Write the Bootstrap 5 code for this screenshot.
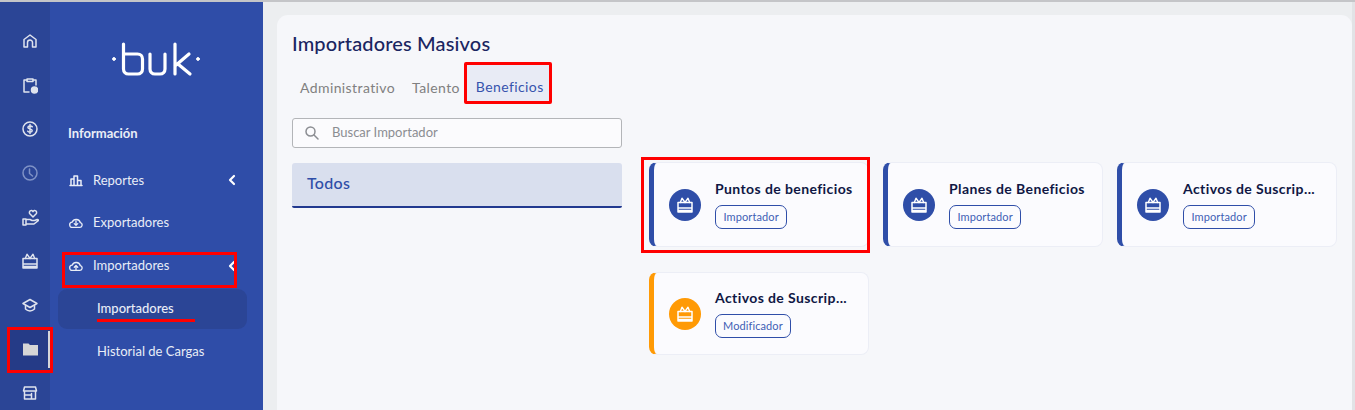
<!DOCTYPE html>
<html lang="es">
<head>
<meta charset="UTF-8">
<meta name="viewport" content="width=device-width, initial-scale=1.0">
<title>Importadores Masivos</title>
<link href="https://cdn.jsdelivr.net/npm/bootstrap@5.3.0/dist/css/bootstrap.min.css" rel="stylesheet">
<style>
html, body { height: 410px; overflow: hidden; }
body { font-family: Lato, "Noto Sans", sans-serif; background: #eceef0; }
.top-shade { height: 2px; background: #c4c5c8; }
.shell { height: 408px; }
.rail { width: 50px; background: #2b4596; padding-top: 17px; flex: none; }
.rail-item { height: 44px; padding-left: 10px; color: #dfe3ee; display: flex; align-items: center; justify-content: center; }
.rail-item.dim { color: #7f92c6; }
.rail-item.on { position: relative; width: 40px; margin-left: 10px; padding-left: 0; background: #253b87; color: #d6d6d6; }
.rail-item.on::before { content: ""; position: absolute; right: 0; top: 4px; bottom: 3px; width: 2px; background: #d4d6da; }
.rail-item.on::after { content: ""; position: absolute; inset: 0 -3px -2px -3px; border: 3px solid #f00; }
.side { width: 213px; background: #2f4da8; flex: none; color: #e9edf7; font-size: 13px; }
.logo-box { height: 44px; margin: 38px 0 0 59px; }
.side-title { margin: 39px 0 0 18px; font-weight: 700; font-size: 13px; height: 20px; line-height: 20px; }
.side-link { height: 42.7px; padding-left: 19px; display: flex; align-items: center; gap: 10px; position: relative; }
.side-link .chev { position: absolute; left: 178px; top: 50%; margin-top: -6px; }
.side-link.first { margin-top: 16px; }
.side-link.marked { z-index: 2; }
.side-link.marked::after { content: ""; position: absolute; left: 12px; top: 8px; width: 175px; height: 36px; border: 3px solid #f00; pointer-events: none; }
.sub-link { height: 43px; padding-left: 47px; display: flex; align-items: center; position: relative; }
.sub-link.on { margin: 2px 16px 1px 8px; padding-left: 39px; height: 40px; background: #2b4596; border-radius: 9px; font-weight: 500; }
.sub-link.on span { position: relative; }
.sub-link.on span::after { content: ""; position: absolute; left: 0; right: -21px; bottom: -3px; height: 3px; background: #f00; }
.workspace { flex: 1; padding: 13px 0 0 14px; background: #eceef0; border-right: 3px solid #e2e3e6; }
.sheet { height: 100%; background: #f6f7fa; border-radius: 11px 11px 0 0; padding: 17px 15px 0; }
.sheet-title { font-size: 20px; font-weight: 500; color: #1a2561; margin: 0; line-height: 22px; letter-spacing: .15px; }
.tab-row { margin-top: 8px; height: 42px; font-size: 14px; color: #808080; letter-spacing: .4px; padding-left: 8px; }
.tab-item { margin: 8px 17px 0 0; }
.tab-sel { margin: 0 0 0 -13px; padding: 0 5px 0 9px; height: 42px; line-height: 44px; background: #e8ebf5; color: #3653ad; border: 3px solid #f00; border-radius: 2px; }
.finder { margin-top: 14px; width: 330px; height: 30px; background: #fbfbfd; border: 1px solid #b3b5b8; border-radius: 3px; padding: 0 12px; display: flex; align-items: center; gap: 13px; color: #8b8d92; font-size: 13px; }
.cat-box { margin-top: 15px; width: 330px; height: 45px; background: #d9dfee; border-bottom: 2px solid #22398f; border-radius: 3px 3px 2px 2px; color: #2f4ea8; font-size: 16px; line-height: 40px; padding-left: 15px; letter-spacing: .3px; font-weight: 500; }
.left-col { width: 330px; flex: none; }
.import-grid { margin: 58px 0 0 27px; width: 688px; display: grid; grid-template-columns: 220px 220px 220px; column-gap: 14px; row-gap: 25px; align-content: start; }
.imp-card { height: 85px; background: #fbfbfe; border: 1px solid #eceef6; border-left: 5px solid #2f4ea8; border-radius: 8px; padding-left: 15px; display: flex; align-items: center; gap: 14px; position: relative; }
.imp-card.alt { height: 83px; border-left-color: #ff9a05; }
.imp-card.marked::after { content: ""; position: absolute; left: -13px; top: -6px; width: 229px; height: 96px; border: 3px solid #f00; pointer-events: none; }
.imp-dot { width: 32px; height: 32px; border-radius: 50%; background: #2f4ea8; flex: none; color: #fff; display: flex; align-items: center; justify-content: center; }
.alt .imp-dot { background: #ff9a05; }
.imp-name { font-size: 14px; font-weight: 700; color: #0f1744; line-height: 18px; letter-spacing: .4px; white-space: nowrap; }
.imp-tag { display: inline-block; margin-top: 7px; height: 24px; line-height: 22px; padding: 0 7.5px; border: 1px solid #2f4ea8; border-radius: 7px; font-size: 11px; color: #3f5fb5; letter-spacing: .1px; }
.alt .imp-tag { padding: 0 7px; }
svg.ico { fill: none; stroke: currentColor; stroke-width: 1.5; stroke-linecap: round; stroke-linejoin: round; }
</style>
</head>
<body>
<svg width="0" height="0" class="d-block">
<symbol id="i-gift" viewBox="0 0 16 16"><path d="M1 5.500h14V15H1zM1 11h14M1 13.500h14" /><path d="M8 5.500L5 1.200 3.300 5.500M8 5.500l3-4.300 1.700 4.300" stroke-width="1.400" /></symbol>
<symbol id="i-cloud-down" viewBox="0 0 16 16"><path d="M4 13h8.500a2.700 2.700 0 0 0 .5-5.300A5 5 0 0 0 3.600 7 3 3 0 0 0 4 13z" /><path d="M8 5.500v5M6 8.700l2 2 2-2" /></symbol>
<symbol id="i-cloud-up" viewBox="0 0 16 16"><path d="M4 13h8.500a2.700 2.700 0 0 0 .5-5.300A5 5 0 0 0 3.600 7 3 3 0 0 0 4 13z" /><path d="M8 13V7.500M6 9.500l2-2 2 2" /></symbol>
</svg>
<div class="top-shade"></div>
<div class="shell d-flex">
  <div class="rail">
    <div class="rail-item"><svg class="ico" width="16" height="16" viewBox="0 0 16 16"><path d="M2 14V6.500L8 2l6 4.500V14h-3.500V9.500a2.500 2.500 0 0 0-5 0V14z"/></svg></div>
    <div class="rail-item"><svg class="ico" width="16" height="17" viewBox="0 0 16 17"><path d="M7 15H2V3h3M11 3h3v5"/><path d="M5 2h6v2.500H5z"/><circle cx="12.500" cy="13" r="3" fill="currentColor"/></svg></div>
    <div class="rail-item"><svg class="ico" width="16" height="16" viewBox="0 0 16 16"><circle cx="8" cy="8" r="7"/><path d="M10.300 5.800C9.800 4.800 6 4.400 5.900 6.300 5.800 8.300 10.300 7.500 10.200 9.700 10.100 11.600 6.400 11.300 5.700 10.200M8 3.500v9"/></svg></div>
    <div class="rail-item dim"><svg class="ico" width="16" height="16" viewBox="0 0 16 16"><circle cx="8" cy="8" r="7"/><path d="M7.500 4v4.500l3 2.500"/></svg></div>
    <div class="rail-item"><svg class="ico" width="17" height="17" viewBox="0 0 17 17"><path d="M11 8L7.800 4.800C6.200 2.600 9.500 0 11 2.700 12.500 0 15.800 2.600 14.200 4.800z"/><path d="M1 10h3v6H1zM4 10.500h4l2 1h2.500l2.700-1c1-.2 1.500.8.700 1.400L12 15H4"/></svg></div>
    <div class="rail-item"><svg class="ico" width="16" height="16"><use href="#i-gift"/></svg></div>
    <div class="rail-item"><svg class="ico" width="16" height="16" viewBox="0 0 16 16"><path d="M8 2.500L1 6.500l7 4 7-4z"/><path d="M3.500 8.500V12c2.500 2.500 6.500 2.500 9 0V8.500"/></svg></div>
    <div class="rail-item on"><svg width="15" height="14" viewBox="0 0 15 14" fill="currentColor"><path d="M0 1.500h5.500L7 3h8v10.500H0z"/></svg></div>
    <div class="rail-item"><svg class="ico" width="16" height="16" viewBox="0 0 16 16"><path d="M2.500 2h11l1 4H1.500zM2.500 6v8h11V6M2.500 10h7M9.500 14V8.500M13.500 14"/></svg></div>
  </div>
  <div class="side">
    <div class="logo-box">
      <svg width="94" height="38" viewBox="0 0 94 38" fill="none" stroke="#fff" stroke-width="3.200" stroke-linecap="round" stroke-linejoin="round">
        <circle cx="5" cy="19" r="1.400" fill="#fff" stroke-width="1"/>
        <path d="M14.500 4v25c0 3 2 5 5 5h9c3 0 5-2 5-5V19c0-3-2-5-5-5h-14"/>
        <path d="M41 14v15c0 3 2 5 5 5h5c3 0 5-2 5-5V14"/>
        <path d="M66 4v30M66 26l14-12M69 24l12 10"/>
        <circle cx="89" cy="19" r="1.400" fill="#fff" stroke-width="1"/>
      </svg>
    </div>
    <div class="side-title">Información</div>
    <div class="side-link first"><svg class="ico" width="14" height="14" viewBox="0 0 14 14"><path d="M1 12.500h12M2 12.500V6h3v6.500M5 12.500V3h3.500v9.500M8.500 12.500V7.500H12v5"/></svg><span>Reportes</span><svg class="chev" width="8" height="12" viewBox="0 0 8 12" fill="none" stroke="#fff" stroke-width="2.200" stroke-linecap="round" stroke-linejoin="round"><path d="M6 2L2 6l4 4"/></svg></div>
    <div class="side-link"><svg class="ico" width="14" height="14"><use href="#i-cloud-down"/></svg><span>Exportadores</span></div>
    <div class="side-link marked"><svg class="ico" width="14" height="14"><use href="#i-cloud-up"/></svg><span>Importadores</span><svg class="chev" width="8" height="12" viewBox="0 0 8 12" fill="none" stroke="#fff" stroke-width="2.200" stroke-linecap="round" stroke-linejoin="round"><path d="M6 2L2 6l4 4"/></svg></div>
    <div class="sub-link on"><span>Importadores</span></div>
    <div class="sub-link">Historial de Cargas</div>
  </div>
  <div class="workspace">
    <div class="sheet">
      <h1 class="sheet-title">Importadores Masivos</h1>
      <div class="tab-row d-flex align-items-center">
        <span class="tab-item">Administrativo</span>
        <span class="tab-item">Talento</span>
        <span class="tab-sel">Beneficios</span>
      </div>
      <div class="d-flex">
        <div class="left-col">
          <div class="finder"><svg class="ico" width="14" height="14" viewBox="0 0 14 14"><circle cx="5.500" cy="5.500" r="4.500"/><path d="M9 9l4 4"/></svg><span>Buscar Importador</span></div>
          <div class="cat-box">Todos</div>
        </div>
        <div class="import-grid">
          <div class="imp-card marked"><div class="imp-dot"><svg class="ico" width="16" height="16"><use href="#i-gift"/></svg></div><div><div class="imp-name">Puntos de beneficios</div><span class="imp-tag">Importador</span></div></div>
          <div class="imp-card"><div class="imp-dot"><svg class="ico" width="16" height="16"><use href="#i-gift"/></svg></div><div><div class="imp-name">Planes de Beneficios</div><span class="imp-tag">Importador</span></div></div>
          <div class="imp-card"><div class="imp-dot"><svg class="ico" width="16" height="16"><use href="#i-gift"/></svg></div><div><div class="imp-name">Activos de Suscrip...</div><span class="imp-tag">Importador</span></div></div>
          <div class="imp-card alt"><div class="imp-dot"><svg class="ico" width="16" height="16"><use href="#i-gift"/></svg></div><div><div class="imp-name">Activos de Suscrip...</div><span class="imp-tag">Modificador</span></div></div>
        </div>
      </div>
    </div>
  </div>
</div>
<script src="https://cdn.jsdelivr.net/npm/bootstrap@5.3.0/dist/js/bootstrap.bundle.min.js"></script>
</body>
</html>
